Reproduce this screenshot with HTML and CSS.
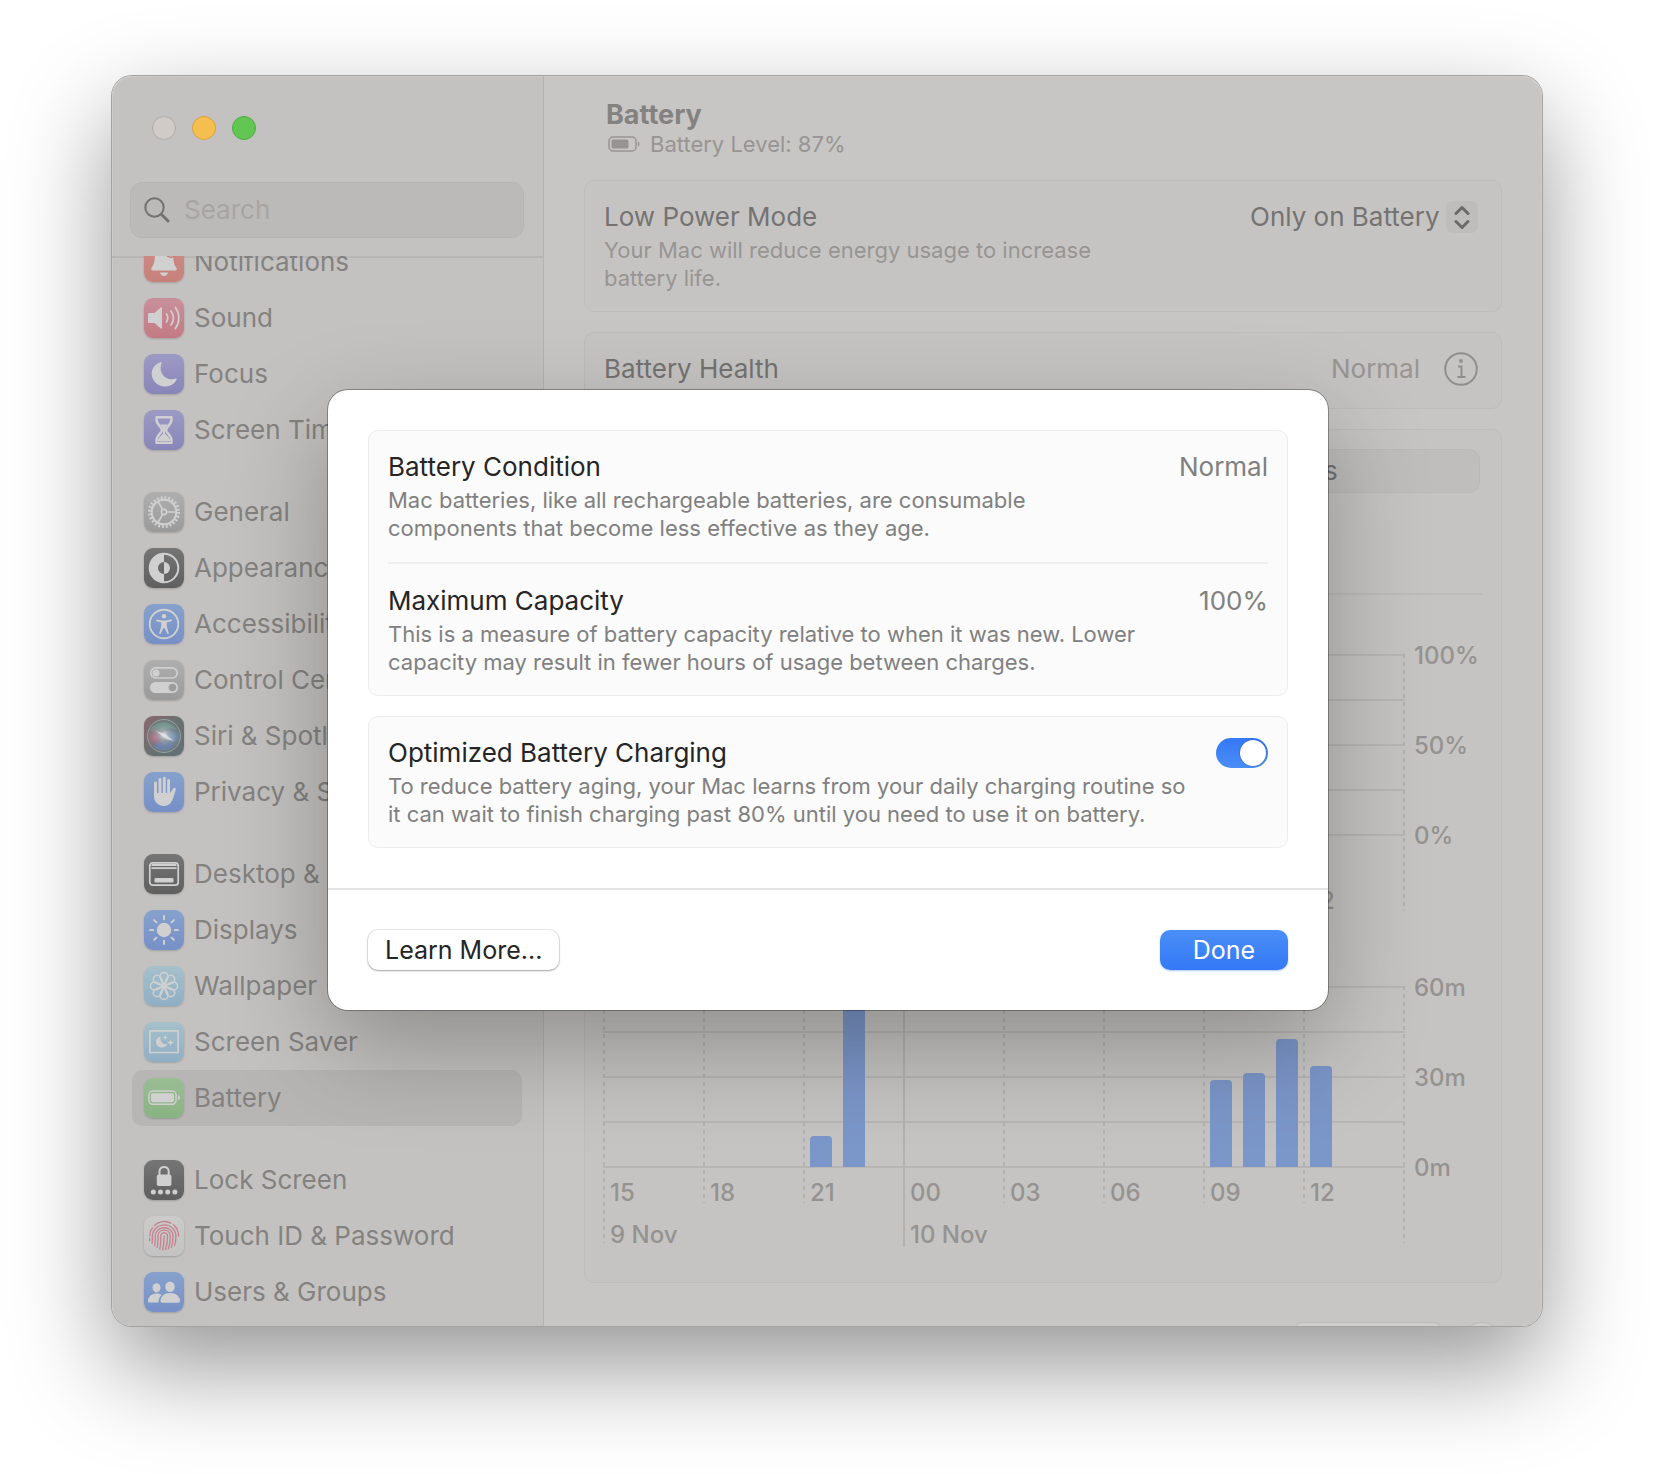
FILE: index.html
```html
<!DOCTYPE html>
<html lang="en">
<head>
<meta charset="utf-8">
<meta name="viewport" content="width=device-width, initial-scale=1">
<title>Battery</title>
<link rel="stylesheet" href="styles.css">
</head>
<body>
<div class="window">
  <aside class="sidebar">
    <div class="sidebar-head">
      <div class="lights">
        <button class="light light-close" type="button" aria-label="Close"></button>
        <button class="light light-min" type="button" aria-label="Minimize"></button>
        <button class="light light-max" type="button" aria-label="Zoom"></button>
      </div>
      <label class="search">
        <svg class="search-icon" viewBox="0 0 26 26" aria-hidden="true"><circle cx="10.500" cy="10.500" r="9.200"/><path d="M17.300 17.300L24 24" stroke-width="3"/></svg>
        <input class="search-input" type="search" placeholder="Search" aria-label="Search">
      </label>
    </div>
    <nav class="nav">
      <ul class="nav-list">
        <li><a class="nav-item" href="#notifications"><svg class="tile red" viewBox="0 0 40 40"><path class="f" d="M20 5c-6 0-9 4-9.200 9.500C10.600 22 9 23.500 7.400 26c-.6 1.200 0 2.500 1.400 2.500h22.400c1.400 0 2-1.300 1.400-2.500C31 23.500 29.400 22 29.200 14.500 29 9 26 5 20 5zM16 30.500h8c-.4 2.200-2 3.500-4 3.500s-3.600-1.300-4-3.500z"/><circle cx="27" cy="10" r="6" fill="#c9837c"/><circle cx="27" cy="10" r="4.500" class="f"/></svg>Notifications</a></li>
        <li><a class="nav-item" href="#sound"><svg class="tile pink" viewBox="0 0 40 40"><path class="f" d="M5.500 15h5l6.300-5.600c.6-.5 1.200-.2 1.200.6v20c0 .8-.6 1.100-1.200.6L10.500 25h-5c-1 0-1.500-.5-1.500-1.500v-7c0-1 .5-1.500 1.500-1.500z"/><path class="s" stroke-width="1.700" d="M22.500 16c1.600 2.500 1.600 5.500 0 8M27 13c3 4.300 3 9.700 0 14M31.400 9.500c4.600 6.400 4.600 14.600 0 21"/></svg>Sound</a></li>
        <li><a class="nav-item" href="#focus"><svg class="tile violet" viewBox="0 0 40 40"><path class="f" d="M16.500 8.200c.7-.3 1.300.2 1 1-3.600 9.800 4.500 18.300 14 15.400.9-.2 1.300.4 1 1.100C30.400 30 26 32.500 21 32.500c-7.400 0-13.300-5.700-13.300-12.700 0-5.300 3.400-9.800 8.800-11.600z"/></svg>Focus</a></li>
        <li><a class="nav-item" href="#screen-time"><svg class="tile violet" viewBox="0 0 40 40"><path class="s" stroke-width="2.400" d="M12.500 7.300h15v2.500c0 5-5.500 7-5.500 10.200s5.500 5.200 5.500 10.200v2.500h-15v-2.500c0-5 5.500-7 5.500-10.200s-5.500-5.200-5.500-10.200z"/><path class="f" d="M16 14.500h8l-3 3.500v5.500l5 5.500v2H14v-2l5-5.500V18z"/></svg>Screen Time</a></li>
      </ul>
      <ul class="nav-list">
        <li><a class="nav-item" href="#general"><svg class="tile gray" viewBox="0 0 40 40"><circle class="s" cx="20" cy="20" r="14.500" stroke-width="3" stroke-dasharray="1.900 1.896"/><circle class="s" cx="20" cy="20" r="12.300" stroke-width="2"/><circle class="s" cx="20" cy="20" r="2.600" stroke-width="1.600"/><path class="s" stroke-width="1.700" d="M22.600 20H32M18.700 17.700L14 9.500M18.700 22.300L14 30.500"/></svg>General</a></li>
        <li><a class="nav-item" href="#appearance"><svg class="tile dark" viewBox="0 0 40 40"><circle class="s" cx="20" cy="20" r="14.300" stroke-width="2"/><path class="f" d="M20 6v8a6 6 0 0 0 0 12v8a14 14 0 0 1 0-28z"/><path class="f" d="M20 14a6 6 0 0 1 0 12z"/></svg>Appearance</a></li>
        <li><a class="nav-item" href="#accessibility"><svg class="tile blue" viewBox="0 0 40 40"><circle class="s" cx="20" cy="20" r="14.300" stroke-width="1.900"/><circle class="f" cx="20" cy="12.300" r="2.300"/><path class="f" d="M13 15.600l5 1h4l5-1c1.200-.2 1.500 1.300.4 1.700l-4.600 1.300v3.800l2 6.500c.3 1.200-1.200 1.600-1.600.5L20.500 24h-1l-2.700 5.400c-.4 1.100-1.900.7-1.600-.5l2-6.500v-3.800l-4.600-1.300c-1.100-.4-.8-1.900.9-1.700z"/></svg>Accessibility</a></li>
        <li><a class="nav-item" href="#control-center"><svg class="tile gray" viewBox="0 0 40 40"><rect class="s" x="6.800" y="7.800" width="26.400" height="10.200" rx="5.100" stroke-width="1.700"/><circle class="f" cx="12" cy="13" r="3.500"/><rect class="f" x="6" y="22" width="28" height="11" rx="5.500"/><circle cx="28.500" cy="27.500" r="3.800" fill="#9d9d9d"/></svg>Control Center</a></li>
        <li><a class="nav-item" href="#siri"><svg class="tile siri" viewBox="0 0 40 40"><defs><radialGradient id="orb"><stop offset="0" stop-color="#e4e6e8"/><stop offset=".35" stop-color="#bcc2ca" stop-opacity=".55"/><stop offset="1" stop-color="#7a8794" stop-opacity="0"/></radialGradient><radialGradient id="rose"><stop offset="0" stop-color="#c4728a"/><stop offset="1" stop-color="#a96a7c" stop-opacity="0"/></radialGradient><radialGradient id="azure"><stop offset="0" stop-color="#7fa3cc"/><stop offset="1" stop-color="#6f8cb4" stop-opacity="0"/></radialGradient></defs><circle cx="20" cy="20" r="16.500" fill="#70797c" stroke="#93a19e" stroke-width="1"/><path d="M6 14c7-10 20-10 27 0-6-3-17-2-22 4z" fill="#74a08e" opacity=".7"/><circle cx="11" cy="21" r="10" fill="url(#rose)"/><circle cx="28" cy="21" r="10" fill="url(#azure)"/><path d="M10 30c6-6 14-5 20 0-5 6-15 6-20 0z" fill="#6c83ba" opacity=".7"/><circle cx="20" cy="19" r="14" fill="url(#orb)"/><path d="M12 15l9 3 9 7-8-2z" fill="#e2e4e6" opacity=".8"/></svg>Siri &amp; Spotlight</a></li>
        <li><a class="nav-item" href="#privacy"><svg class="tile blue" viewBox="0 0 40 40"><path class="s" stroke-width="2.900" d="M11.500 11v13M16 7.500V22M20.300 6.300V22M24.600 8.500V22"/><path class="f" d="M10 21h16.100l3.200-4.700c.8-1.200 2.900-.5 2.500 1.100-1.400 4.600-2.300 9-4.300 12.100C25.800 32.400 23.500 34 20 34c-6 0-10-4.200-10-10z"/></svg>Privacy &amp; Security</a></li>
      </ul>
      <ul class="nav-list">
        <li><a class="nav-item" href="#desktop"><svg class="tile dark" viewBox="0 0 40 40"><rect class="s" x="5.800" y="8.800" width="28.400" height="22.400" rx="3" stroke-width="1.700"/><path class="f" d="M7.500 12V11c0-.6.400-1 1-1h23c.6 0 1 .4 1 1v1zM7.500 13.300h25v1.700h-25z"/><rect class="f" x="10.500" y="24" width="19" height="4.500" rx="1"/></svg>Desktop &amp; Dock</a></li>
        <li><a class="nav-item" href="#displays"><svg class="tile blue" viewBox="0 0 40 40"><circle class="f" cx="20" cy="20" r="7.200"/><path class="s" stroke-width="2" d="M20 6v3.200M20 30.800V34M6 20h3.200M30.800 20H34M10.100 10.100l2.300 2.300M27.600 27.600l2.300 2.300M10.100 29.900l2.300-2.300M27.600 12.400l2.300-2.300"/></svg>Displays</a></li>
        <li><a class="nav-item" href="#wallpaper"><svg class="tile sky" viewBox="0 0 40 40"><g class="s" stroke-width="1.500"><path id="petal" d="M20 20c-2-4-4-6.500-4-9.500a4 4 0 0 1 8 0c0 3-2 5.500-4 9.500z"/><use href="#petal" transform="rotate(45 20 20)"/><use href="#petal" transform="rotate(90 20 20)"/><use href="#petal" transform="rotate(135 20 20)"/><use href="#petal" transform="rotate(180 20 20)"/><use href="#petal" transform="rotate(225 20 20)"/><use href="#petal" transform="rotate(270 20 20)"/><use href="#petal" transform="rotate(315 20 20)"/></g></svg>Wallpaper</a></li>
        <li><a class="nav-item" href="#screen-saver"><svg class="tile sky" viewBox="0 0 40 40"><rect class="s" x="5.900" y="8.900" width="28.200" height="21.600" stroke-width="1.700"/><path class="f" d="M16.500 14.500c-1 5 2.500 8.800 7 7.500-1 2.200-3 3.500-5.400 3.500-3.500 0-6.100-2.400-6.100-5.500 0-2.600 1.700-4.800 4.500-5.500z"/><path class="f" d="M21.300 12.700l.7 2.100 2.100.7-2.100.7-.7 2.100-.7-2.100-2.100-.7 2.100-.7zM26.500 17l.9 2.600 2.600.9-2.600.9-.9 2.600-.9-2.600-2.600-.9 2.600-.9z"/></svg>Screen Saver</a></li>
        <li><a class="nav-item is-current" href="#battery" aria-current="page"><svg class="tile green" viewBox="0 0 40 40"><rect class="s" x="4.900" y="13" width="27.200" height="13.300" rx="4" stroke-width="1.500"/><rect class="f" x="7" y="15.200" width="23" height="9" rx="2"/><path class="f" d="M34 17.300c1.300.3 2 1.200 2 2.400s-.7 2.100-2 2.400z"/></svg>Battery</a></li>
      </ul>
      <ul class="nav-list">
        <li><a class="nav-item" href="#lock-screen"><svg class="tile dark" viewBox="0 0 40 40"><rect class="f" x="12.800" y="14.500" width="14.600" height="11.500" rx="1.800"/><path class="s" stroke-width="2" d="M15.500 15v-3.500c0-6 9.200-6 9.200 0V15"/><circle class="f" cx="9.300" cy="32" r="2.500"/><circle class="f" cx="16.500" cy="32" r="2.500"/><circle class="f" cx="23.700" cy="32" r="2.500"/><circle class="f" cx="30.900" cy="32" r="2.500"/></svg>Lock Screen</a></li>
        <li><a class="nav-item" href="#touch-id"><svg class="tile pale" viewBox="0 0 40 40"><g fill="none" stroke="#c5808c" stroke-width="1.300" stroke-linecap="round"><path d="M10.500 9.500a14.300 14.300 0 0 1 16.500-2.400M29.500 8.800c3.500 3 5 7 5 11.200M5.700 20c0-3.300 1-6 2.800-8.300M5.700 22.500v2"/><path d="M8 27c.6-2.300.3-4.500.4-7 .2-14 23-15.700 23.500 0 0 3.500-.3 6.500-1.300 9.500"/><path d="M10.500 29.500c1-3 .6-6.300.7-9.500.2-10.500 17.400-11.500 17.800 0 .1 4.200-.5 8-1.700 11.500"/><path d="M13 31.500c1.300-3.500 1-7.500 1-11.500 0-7.500 12-8 12.300 0 .1 4.700-.6 9-2 13"/><path d="M15.700 33c1.300-4 1.100-8.500 1.100-13 0-4 6.700-4.500 6.700 0 0 5-.5 9.500-2 13.700"/><path d="M18.500 34c1.600-4.500 1.600-9 1.600-14"/></g></svg>Touch ID &amp; Password</a></li>
        <li><a class="nav-item" href="#users"><svg class="tile blue" viewBox="0 0 40 40"><ellipse class="f" cx="12.500" cy="15.800" rx="4" ry="4.600"/><ellipse class="f" cx="26" cy="14.800" rx="4.800" ry="5.200"/><path class="f" d="M4 29c0-4.500 4-7.500 8.500-7.500 2 0 3.600.4 5.200 1.500-2 1.700-3.200 4-3.200 7.500H5.500C4.500 30.500 4 30 4 29zM16.500 29c0-4.500 4-8 9.700-8s9.800 3.500 9.800 8c0 1-.6 1.700-1.600 1.700H18.100c-1 0-1.600-.7-1.600-1.700z"/></svg>Users &amp; Groups</a></li>
      </ul>
    </nav>
  </aside>

  <main class="pane">
    <header class="pane-head">
      <h1 class="pane-title">Battery</h1>
      <p class="pane-level"><svg class="level-icon" viewBox="0 0 32 16" aria-hidden="true"><rect x="1" y="1" width="27" height="14" rx="4" fill="none" stroke="#979593" stroke-width="1.500"/><rect x="3.500" y="3.500" width="17" height="9" rx="1.500" fill="#979392"/><path d="M30 5.500c2 .6 2 4.400 0 5z" fill="#979593"/></svg>Battery Level: 87%</p>
    </header>
    <section class="card dim">
      <div class="row">
        <div class="row-text narrow">
          <h2 class="row-title">Low Power Mode</h2>
          <p class="row-note">Your Mac will reduce energy usage to increase battery life.</p>
        </div>
        <div class="picker">
          <select class="picker-select" aria-label="Low Power Mode"><option>Only on Battery</option></select>
          <svg class="picker-icon" viewBox="0 0 32 32" aria-hidden="true"><path d="M10 12.500L16 6.500l6 6M10 20.500l6 6 6-6"/></svg>
        </div>
      </div>
    </section>
    <section class="card dim">
      <div class="row row-health">
        <h2 class="row-title">Battery Health</h2>
        <span class="row-value">Normal</span>
        <button class="info" type="button" aria-label="Battery health details"><svg viewBox="0 0 34 34"><circle cx="17" cy="17" r="15.800"/><circle class="dot" cx="17" cy="9" r="1.900"/><path d="M14 14.500h3.500V25M13.500 25h8"/></svg></button>
      </div>
    </section>
    <section class="card card-usage dim">
      <div class="segments">
        <button class="segment is-on" type="button">Last 24 Hours</button>
        <button class="segment" type="button">Last 10 Days</button>
      </div>
      <hr class="rule">
      <div class="chart chart-level">
        <div class="plot">
          <div class="gridlines"></div>
          <ol class="ticks">
            <li class="tick long">15</li><li class="tick">18</li><li class="tick">21</li><li class="tick solid">00</li><li class="tick">03</li><li class="tick">06</li><li class="tick">09</li><li class="tick">12</li><li class="tick long"></li>
          </ol>
        </div>
        <div class="scale"><span>100%</span><span>50%</span><span>0%</span></div>
      </div>
      <div class="chart chart-screen">
        <div class="plot">
          <div class="gridlines"></div>
          <ol class="ticks">
            <li class="tick long">15<span class="day">9 Nov</span></li><li class="tick">18</li><li class="tick">21</li><li class="tick solid">00<span class="day">10 Nov</span></li><li class="tick">03</li><li class="tick">06</li><li class="tick">09</li><li class="tick">12</li><li class="tick long"></li>
          </ol>
          <div class="bars">
            <i class="bar" style="grid-column:7;height:17%"></i>
            <i class="bar" style="grid-column:8;height:100%"></i>
            <i class="bar" style="grid-column:19;height:48%"></i>
            <i class="bar" style="grid-column:20;height:52%"></i>
            <i class="bar" style="grid-column:21;height:71%"></i>
            <i class="bar" style="grid-column:22;height:56%"></i>
          </div>
        </div>
        <div class="scale"><span>60m</span><span>30m</span><span>0m</span></div>
      </div>
    </section>
    <footer class="pane-foot">
      <button class="foot-options" type="button" aria-label="Options"></button>
      <button class="foot-help" type="button" aria-label="Help"></button>
    </footer>
  </main>

  <div class="overlay">
    <div class="sheet" role="dialog" aria-modal="true" aria-label="Battery Health">
      <div class="sheet-body">
        <section class="card">
          <div class="row">
            <div class="row-text">
              <h2 class="row-title">Battery Condition</h2>
              <p class="row-note">Mac batteries, like all rechargeable batteries, are consumable<br>components that become less effective as they age.</p>
            </div>
            <span class="row-value">Normal</span>
          </div>
          <hr class="rule">
          <div class="row">
            <div class="row-text">
              <h2 class="row-title">Maximum Capacity</h2>
              <p class="row-note">This is a measure of battery capacity relative to when it was new. Lower<br>capacity may result in fewer hours of usage between charges.</p>
            </div>
            <span class="row-value">100%</span>
          </div>
        </section>
        <section class="card">
          <div class="row">
            <div class="row-text">
              <h2 class="row-title"><label for="optimized">Optimized Battery Charging</label></h2>
              <p class="row-note">To reduce battery aging, your Mac learns from your daily charging routine so<br>it can wait to finish charging past 80% until you need to use it on battery.</p>
            </div>
            <input class="switch" id="optimized" type="checkbox" role="switch" checked>
          </div>
        </section>
      </div>
      <footer class="sheet-foot">
        <button class="btn" type="button">Learn More...</button>
        <button class="btn btn-primary" type="button">Done</button>
      </footer>
    </div>
  </div>
</div>
</body>
</html>
```
FILE: styles.css
```css
* { box-sizing: border-box; }

body {
  margin: 0;
  height: 100vh;
  padding: 76px 112px 148px;
  background: #fff;
  color: #252525;
  font: 400 26px/32px Inter, "Liberation Sans", sans-serif;
  overflow: hidden;
}

h1, h2, p, ul, ol { margin: 0; padding: 0; }
h2 { font-weight: 400; }
ul, ol { list-style: none; }
button, input, select { font: inherit; color: inherit; margin: 0; padding: 0; border: 0; background: none; }

.window {
  position: relative;
  display: grid;
  grid-template-columns: 432px minmax(0, 1fr);
  grid-template-rows: minmax(0, 1fr);
  height: 100%;
  border-radius: 20px;
  box-shadow: 0 0 0 1px #a3a2a1, 0 40px 100px rgba(0, 0, 0, .42);
}

/* Sidebar */
.sidebar {
  display: flex;
  flex-direction: column;
  min-height: 0;
  overflow: hidden;
  background: #c4c2c0;
  border-right: 1px solid #b5b3b1;
  border-radius: 20px 0 0 20px;
  box-shadow: inset 1px 1px #cdcbca;
}

.sidebar-head { padding: 40px 19px 18px 18px; }

.lights { display: flex; gap: 16px; padding: 0 22px 42px; }
.light { width: 24px; height: 24px; border-radius: 50%; border: 1px solid #b1aba6; }
.light-close { background: #d0cbc6; }
.light-min { background: #f5bf4f; border-color: #d9a33d; }
.light-max { background: #62c655; border-color: #51a945; }

.search {
  display: flex;
  align-items: center;
  gap: 14px;
  height: 56px;
  padding: 0 13px;
  border: 1px solid #b7b5b3;
  border-radius: 12px;
  background: #bcbab8;
}
.search-icon { width: 26px; height: 26px; flex: none; fill: none; stroke: #747270; stroke-width: 2; stroke-linecap: round; }
.search-input { min-width: 0; flex: 1; outline: 0; appearance: none; }
.search-input::placeholder { color: #a7a5a4; opacity: 1; }

.nav {
  flex: 1;
  min-height: 0;
  overflow: hidden;
  padding: 0 21px 0 20px;
  background: linear-gradient(#b8b6b4, #b8b6b4) top / 100% 2px no-repeat;
}
.nav-list { margin-bottom: 26px; }
.nav-list:first-child { margin-top: -22px; }
.nav-item {
  display: flex;
  align-items: center;
  gap: 10px;
  height: 56px;
  padding: 0 12px;
  border-radius: 10px;
  color: #838280;
  text-decoration: none;
  white-space: nowrap;
}
.nav-item.is-current { background: #b8b6b4; }

.tile { width: 40px; height: 40px; flex: none; border-radius: 9px; box-shadow: 0 1px 2px rgba(0, 0, 0, .18); }
.tile .f { fill: #d0d0d0; }
.tile .s { fill: none; stroke: #d0d0d0; stroke-linecap: round; stroke-linejoin: round; }
.tile [stroke-dasharray] { stroke-linecap: butt; }
.red { background: linear-gradient(#cc8e89, #c8807a); }
.pink { background: linear-gradient(#c8909c, #c47a84); }
.violet { background: linear-gradient(#9d9ac4, #8885b9); }
.gray { background: linear-gradient(#afafaf, #9a9a9b); }
.dark { background: linear-gradient(#757575, #5f5f5f); }
.blue { background: linear-gradient(#86a1cb, #7690c8); }
.sky { background: linear-gradient(#a6c0cb, #8fafc6); }
.green { background: linear-gradient(#9abd94, #89b381); }
.pale { background: linear-gradient(#cbcbcb, #c3c3c3); }
.siri { background: linear-gradient(135deg, #8c6670, #68716f 50%, #647078); }

/* Detail pane */
.pane {
  min-height: 0;
  overflow: hidden;
  padding: 0 40px;
  background: #c8c6c4;
  border-radius: 0 20px 20px 0;
  box-shadow: inset -1px 1px #cfcdcb;
}
.pane-head { height: 104px; padding: 24px 22px 0; color: #838280; }
.pane-title { font-size: 27px; line-height: 30px; font-weight: 700; }
.pane-level { display: flex; align-items: center; gap: 10px; padding-left: 2px; font-size: 22px; line-height: 28px; color: #979593; }
.level-icon { width: 32px; height: 16px; }

.card {
  padding: 20px 19px 19px;
  border: 1px solid #ececec;
  border-radius: 10px;
  background: #fbfbfb;
}
.card + .card { margin-top: 20px; }
.card.dim { background: #c6c4c2; border-color: #bfbdbb; color: #747372; }

.row { display: flex; align-items: flex-start; justify-content: space-between; gap: 16px; }
.row-title { font-size: 26px; line-height: 32px; }
.row-note { margin-top: 3px; font-size: 22px; line-height: 28px; color: #808080; }
.row-value { color: #808080; }
.dim .row-note, .dim .row-value { color: #979593; }
.row-text.narrow { max-width: 510px; }
.row-health { align-items: center; gap: 24px; height: 32px; margin-bottom: 4px; }
.row-health .row-title { flex: 1; }

.rule { height: 2px; margin: 20px 0; border: 0; background: #eee; }
.sheet .rule { margin-bottom: 21px; }

.picker { display: grid; align-items: center; }
.picker > * { grid-area: 1 / 1; }
.picker-select { appearance: none; padding-right: 38px; margin-right: 4px; }
.picker-icon {
  justify-self: end;
  width: 32px;
  height: 32px;
  margin-right: 4px;
  border-radius: 7px;
  background: #bfbdbb;
  fill: none;
  stroke: #6b6a69;
  stroke-width: 3;
  stroke-linecap: round;
  stroke-linejoin: round;
  pointer-events: none;
}

.info { width: 34px; height: 34px; margin-right: 4px; }
.info svg { display: block; fill: none; stroke: #918f8e; stroke-width: 2; }
.info .dot { fill: #918f8e; stroke: none; }

.card-usage { padding: 19px 19px 35px; }
.segments {
  display: grid;
  grid-template-columns: 1fr 1fr;
  height: 44px;
  margin-right: 2px;
  border: 1px solid #bbb9b7;
  border-radius: 11px;
  background: #c0bebc;
}
.segment { border-radius: 10px; }
.segment.is-on { background: #cccac8; }
.dim .rule { margin: 100px 0 59px; background: #bebcba; }

/* Charts */
.chart {
  display: grid;
  grid-template-columns: minmax(0, 1fr) 77px;
  margin-left: -1px;
  font-size: 24px;
  font-weight: 500;
  line-height: 28px;
  color: #959391;
}
.chart-level { height: 257px; }
.chart-screen { height: 261px; margin-top: 75px; }
.plot { display: grid; align-items: start; }
.plot > * { grid-area: 1 / 1; }
.gridlines { height: 182px; background: repeating-linear-gradient(#b8b6b4 0 2px, transparent 2px 45px); }
.ticks { display: grid; grid-template-columns: repeat(8, minmax(0, 1fr)) 2px; align-items: start; }
.tick {
  height: 217px;
  padding: 193px 0 0 7px;
  background: repeating-linear-gradient(#b4b2b0 0 4px, transparent 4px 8px) left / 2px 100% no-repeat;
  white-space: nowrap;
}
.tick.long { height: 257px; }
.tick.solid { height: 261px; background: linear-gradient(#b4b2b0, #b4b2b0) left / 2px 100% no-repeat; }
.tick:last-child { padding: 0; }
.chart-level .tick { height: 257px; padding-top: 233px; }
.day { display: block; margin-top: 14px; }
.bars { display: grid; grid-template-columns: repeat(24, minmax(0, 1fr)); align-items: end; justify-items: center; height: 181px; padding: 0 1px; }
.bar { width: 22px; border-radius: 4px 4px 0 0; background: #7b96c9; }
.scale { display: flex; flex-direction: column; justify-content: space-between; height: 208px; margin-top: -12px; padding-left: 9px; }

.pane-foot { display: flex; justify-content: flex-end; gap: 19px; padding-top: 39px; }
.foot-options, .foot-help { height: 40px; background: #cfcecd; border: 1px solid #bbb9b7; }
.foot-options { width: 150px; border-radius: 10px; }
.foot-help { width: 40px; border-radius: 50%; }

/* Sheet */
.overlay { position: absolute; inset: 0; display: grid; place-items: center; padding: 0 0 2px 2px; }
.sheet {
  width: min(1000px, 100% - 80px);
  border-radius: 20px;
  background: #fff;
  box-shadow: 0 0 0 1px rgba(0, 0, 0, .3), 0 36px 100px rgba(0, 0, 0, .28);
}
.sheet-body { padding: 40px; }
.sheet-foot { display: flex; justify-content: space-between; padding: 40px; border-top: 2px solid #e5e5e5; }

.btn {
  height: 40px;
  padding: 0 17px;
  border-radius: 10px;
  background: #fff;
  font-size: 25px;
  box-shadow: 0 0 0 1px rgba(0, 0, 0, .08), 0 1px 2px rgba(0, 0, 0, .3);
}
.btn-primary {
  width: 128px;
  color: #fff;
  background: linear-gradient(#4a8ff7, #3478f6);
  box-shadow: 0 1px 2px rgba(52, 120, 246, .4);
}

.switch {
  appearance: none;
  display: grid;
  align-items: center;
  width: 52px;
  height: 30px;
  margin-top: 1px;
  padding: 0 2px;
  border-radius: 15px;
  background: #d8d8d8;
}
.switch::before { content: ""; width: 26px; height: 26px; border-radius: 50%; background: #fff; box-shadow: 0 0 2px rgba(0, 0, 0, .35); }
.switch:checked { justify-items: end; background: linear-gradient(#3577f5, #4a8ff7); }
```
